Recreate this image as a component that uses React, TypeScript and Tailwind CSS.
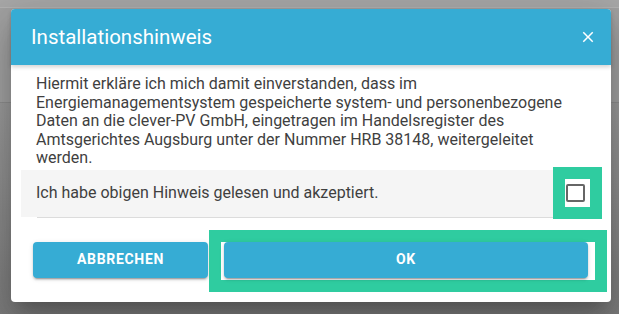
import React from "react"

function CloseIcon() {
    return (
        <svg width="18" height="18" viewBox="0 0 24 24" fill="white">
            <path d="M19 6.41 17.59 5 12 10.59 6.41 5 5 6.41 10.59 12 5 17.59 6.41 19 12 13.41 17.59 19 19 17.59 13.41 12z" />
        </svg>
    )
}

const buttonClass =
    "h-[36px] rounded-[4px] bg-[#36acd4] text-[14px] font-bold tracking-[0.05em] text-white uppercase shadow-[0_3px_1px_-2px_rgba(0,0,0,0.2),0_2px_2px_0_rgba(0,0,0,0.14),0_1px_5px_0_rgba(0,0,0,0.12)]"

export default function App() {
    return (
        <div className="relative h-[314px] w-[619px] overflow-hidden bg-[#9a9a9a] font-['Roboto',sans-serif]">
            {/* page behind the overlay */}
            <div className="absolute inset-0 flex flex-col">
                <div className="h-[8px] bg-[#a8a8a8] border-b border-[#b3b3b3]" />
                <div className="h-[95px] bg-[#a2a2a2] border-b border-[#8e8e8e]" />
                <div className="flex-1 bg-gradient-to-b from-[#9b9b9b] to-[#7c7c7c]" />
            </div>

            <div className="relative ml-[11px] mt-[9px] flex w-[600px] flex-col rounded-[4px] bg-white shadow-[0_11px_15px_-7px_rgba(0,0,0,0.2),0_24px_38px_3px_rgba(0,0,0,0.14),0_9px_46px_8px_rgba(0,0,0,0.12)]">
                {/* header */}
                <div className="relative z-10 flex h-[56px] items-center justify-between rounded-t-[4px] bg-[#36acd4] pl-[20px] pr-[14px] shadow-[0_2px_4px_rgba(0,0,0,0.18)]">
                    <span className="text-[20.5px] text-white">Installationshinweis</span>
                    <CloseIcon />
                </div>

                {/* body */}
                <p className="pl-[25px] pr-[22px] pt-[10px] text-[16px] leading-[18.6px] text-[#3f3f3f]">
                    Hiermit erkläre ich mich damit einverstanden, dass im Energiemanagementsystem gespeicherte system- und
                    personenbezogene Daten an die clever-PV GmbH, eingetragen im Handelsregister des Amtsgerichtes Augsburg
                    unter der Nummer HRB 38148, weitergeleitet werden.
                </p>

                <div className="mx-[10px] mt-[2px]">
                    <div className="flex h-[47px] items-center justify-between bg-[#f5f5f5] pl-[15px]">
                        <span className="text-[16px] text-[#3f3f3f]">Ich habe obigen Hinweis gelesen und akzeptiert.</span>
                        <div className="-mr-[1px] flex h-[52px] w-[49px] shrink-0 border-[12px] border-[#2fcca0] bg-white pl-[1px] pt-[5px]">
                            <div className="h-[18px] w-[19px] rounded-[2px] border-2 border-[#666]" />
                        </div>
                    </div>
                    <div className="ml-[16px] h-px bg-[#dcdcdc]" />
                </div>

                {/* actions */}
                <div className="mt-[12px] flex items-start pb-[10px] pl-[22px] pr-[4px]">
                    <button className={`${buttonClass} mt-[12px] w-[175px]`}>Abbrechen</button>
                    <div className="ml-[1px] flex-1 border-[12px] border-[#2fcca0] bg-white pb-[2px] pl-[3px] pr-[7px]">
                        <button className={`${buttonClass} w-full`}>OK</button>
                    </div>
                </div>
            </div>
        </div>
    )
}
